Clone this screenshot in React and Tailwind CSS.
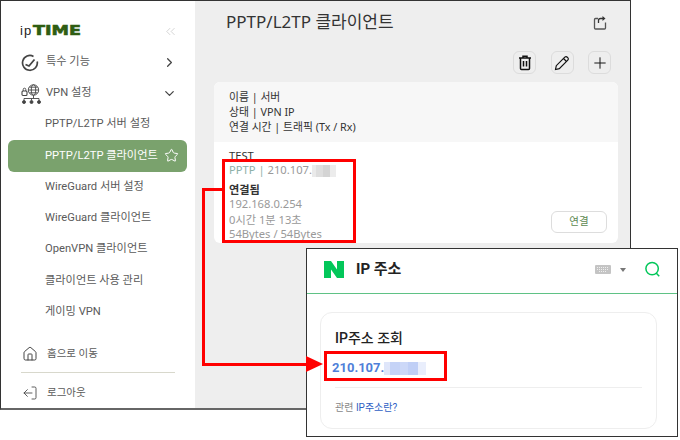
import { ChevronRight, ChevronDown, ChevronsLeft, Star, Plus, Home, LogOut } from 'lucide-react';

const KR = 'font-["Roboto","Noto_Sans_CJK_KR",sans-serif]';
const NOTO = 'font-["Noto_Sans","Noto_Sans_CJK_KR",sans-serif]';

function GaugeIcon() {
  return (
    <svg width="18" height="18" viewBox="0 0 18 18" fill="none" stroke="#444" strokeWidth="1.7">
      <path d="M12.5 2.4A7.4 7.4 0 1 0 16.2 7.5" />
      <path d="M4.5 10.5 L8 12 L13.5 5.5" strokeWidth="1.8" />
    </svg>
  );
}

function VpnIcon() {
  return (
    <svg width="20" height="20" viewBox="0 0 20 20" fill="none" stroke="#444" strokeWidth="0.9">
      <circle cx="12.5" cy="6" r="5.2" />
      <ellipse cx="12.5" cy="6" rx="2.2" ry="5.2" />
      <path d="M7.5 6h10M8.5 3.2h8M8.5 8.8h8" />
      <rect x="1" y="7" width="5" height="4.5" rx="1" strokeWidth="1.1" />
      <path d="M2.2 7V5.5a1.3 1.3 0 0 1 2.6 0V7" />
      <path d="M12.5 11.2v3M3 14.5h15M3 14.5v2M10.5 14.5v2M18 14.5v2" />
      <circle cx="3" cy="18" r="1.5" fill="#444" />
      <circle cx="10.5" cy="18" r="1.5" fill="#444" />
      <circle cx="18" cy="18" r="1.5" fill="#444" />
    </svg>
  );
}

function ExportIcon() {
  return (
    <svg width="14" height="15" viewBox="0 0 14 15" fill="none" stroke="#555" strokeWidth="1.3">
      <path d="M5 3.5H2.5a1 1 0 0 0-1 1v8.5a1 1 0 0 0 1 1h9a1 1 0 0 0 1-1V7.5" />
      <path d="M5.5 8V5.5a2 2 0 0 1 2-2h3.5" stroke="#333" />
      <path d="M9.5 1l3 2.5-3 2.5z" fill="#333" stroke="none" />
    </svg>
  );
}

function TrashIcon() {
  return (
    <svg width="14" height="16" viewBox="0 0 14 16" fill="none" stroke="#111" strokeWidth="1.5">
      <path d="M1 3h12M5 3V1.2h4V3" />
      <path d="M2.5 3v10.5a1 1 0 0 0 1 1h7a1 1 0 0 0 1-1V3" />
      <path d="M5.5 6v5.5M8.5 6v5.5" />
    </svg>
  );
}

function PencilIcon() {
  return (
    <svg width="16" height="16" viewBox="0 0 16 16" fill="none" stroke="#111" strokeWidth="1.2">
      <path d="M1.5 14.5l.8-3.8L10.8 2.2a1.8 1.8 0 0 1 2.5 0l.5.5a1.8 1.8 0 0 1 0 2.5L5.3 13.7z" />
      <path d="M9.5 3.5l3 3" />
    </svg>
  );
}

function NavRow({ icon, label, right }) {
  return (
    <div className="flex items-center h-[31px] shrink-0 pl-[20px] pr-[18px]">
      <div className="w-[25px] shrink-0 flex items-center">{icon}</div>
      <span className="text-[11.2px] text-[#5a5a5a] whitespace-nowrap">{label}</span>
      <div className="ml-auto">{right}</div>
    </div>
  );
}

function SubRow({ label, active }) {
  return (
    <div
      className={`flex items-center h-[31.3px] shrink-0 ml-[7px] mr-[8px] pl-[37px] pr-[8px] rounded-[6px] text-[11.2px] whitespace-nowrap ${
        active ? 'bg-[#7aa26d] text-white' : 'text-[#5a5a5a]'
      }`}
    >
      {label}
      {active && <Star size={15} strokeWidth={1.6} className="ml-auto" />}
    </div>
  );
}

function ToolButton({ children }) {
  return (
    <div className="w-[23px] h-[23px] rounded-[6px] border border-[#dcdcdc] flex items-center justify-center">
      {children}
    </div>
  );
}

export default function App() {
  return (
    <div className={`relative w-[680px] h-[440px] bg-white overflow-hidden ${KR}`}>
      {/* main window */}
      <div className="w-[631px] h-[410px] flex border-x border-t border-[#333] border-b-2 border-b-[#666] bg-[#eeeeee]">
        <aside className="w-[194px] shrink-0 h-full bg-white flex flex-col overflow-hidden">
          <div className="flex items-center h-[32px] shrink-0 mt-[14px] pl-[19px] pr-[17px]">
            <span className='text-[13px] text-[#222] tracking-[1px] font-["Liberation_Sans"]'>ip</span>
            <span className='ml-[1px] text-[13.5px] font-["DejaVu_Sans"] font-bold text-[#2f5d12] leading-none origin-left scale-x-[1.3] [-webkit-text-stroke:0.6px_#2f5d12]'>
              TIME
            </span>
            <ChevronsLeft size={15} strokeWidth={1} className="ml-auto text-[#bbb]" />
          </div>
          <NavRow icon={<GaugeIcon />} label="특수 기능" right={<ChevronRight size={15} strokeWidth={2} className="text-[#444]" />} />
          <NavRow icon={<VpnIcon />} label="VPN 설정" right={<ChevronDown size={15} strokeWidth={2} className="text-[#444]" />} />
          <SubRow label="PPTP/L2TP 서버 설정" />
          <SubRow label="PPTP/L2TP 클라이언트" active />
          <SubRow label="WireGuard 서버 설정" />
          <SubRow label="WireGuard 클라이언트" />
          <SubRow label="OpenVPN 클라이언트" />
          <SubRow label="클라이언트 사용 관리" />
          <SubRow label="게이밍 VPN" />
          <div className="mt-[7px] mx-[20px] flex items-center h-[38px] shrink-0 border-b border-[#d8d8cc] text-[10.5px] text-[#5a5a5a]">
            <Home size={16} strokeWidth={1.5} className="mr-[9px] ml-[1px] text-[#444]" />
            홈으로 이동
          </div>
          <div className="mx-[20px] flex items-center h-[36px] shrink-0 pt-[4px] text-[10.5px] text-[#5a5a5a]">
            <LogOut size={16} strokeWidth={1.3} className="mr-[9px] ml-[1px] text-[#444] -scale-x-100" />
            로그아웃
          </div>
        </aside>
        <main className={`flex-1 pl-[19px] pr-[12px] pt-[8px] ${NOTO}`}>
          <div className="flex items-center justify-between h-[26px] pl-[12px] pr-[11px]">
            <h1 className="text-[17px] text-[#333] font-normal whitespace-nowrap">PPTP/L2TP 클라이언트</h1>
            <ExportIcon />
          </div>
          <div className="flex justify-end gap-[14.5px] mt-[16px] pr-[7px]">
            <ToolButton><TrashIcon /></ToolButton>
            <ToolButton><PencilIcon /></ToolButton>
            <ToolButton><Plus size={18} strokeWidth={1.3} className="text-[#111]" /></ToolButton>
          </div>
          <div className="mt-[8px] h-[161px] rounded-[6px] overflow-hidden bg-white flex flex-col">
            <div className="h-[60px] bg-[#f7f7f7] px-[15px] pt-[7px] text-[10.8px] leading-[15px] text-[#333] shrink-0">
              <div>이름 | 서버</div>
              <div>상태 | VPN IP</div>
              <div>연결 시간 | 트래픽 (Tx / Rx)</div>
            </div>
            <div className="relative flex-1 px-[15px] pt-[7px] text-[11.2px]">
              <div className="leading-[14px] text-[#333]">TEST</div>
              <div className="leading-[14px] text-[#999] whitespace-nowrap">
                <span className="text-[#8db0a8]">PPTP</span> <span className="text-[#8db0a8]">|</span> 210.107.
                <span className="inline-flex h-[12px] align-middle">
                  <span className="w-[4px] bg-[#eaeaea]" />
                  <span className="w-[7px] bg-[#dedede]" />
                  <span className="w-[7px] bg-[#d4d4d4]" />
                  <span className="w-[6px] bg-[#ececec]" />
                </span>
              </div>
              <div className="mt-[6px] leading-[14px] font-bold text-[#333]">연결됨</div>
              <div className="leading-[14px] text-[#999]">192.168.0.254</div>
              <div className="mt-[2px] leading-[14px] text-[#999]">0시간 1분 13초</div>
              <div className="leading-[14px] text-[#999]">54Bytes / 54Bytes</div>
              <button className="absolute right-[11px] bottom-[10px] w-[56px] h-[22px] rounded-[6px] border border-[#ddd] bg-white text-[10.5px] text-[#5d8a52]">
                연결
              </button>
            </div>
          </div>
        </main>
      </div>

      {/* red callouts */}
      <div className="absolute left-[222px] top-[159px] w-[134px] h-[84px] border-[3px] border-[#f00]" />
      <div className="absolute left-[202px] top-[188px] w-[20px] h-[178px] border-l-[3px] border-t-[3px] border-[#f00]" />

      {/* naver window */}
      <div className="absolute left-[306px] top-[248px] w-[372px] h-[189px] border border-[#333] bg-white flex flex-col">
        <div className="h-[45px] shrink-0 border-b border-[#5fc285] flex items-center pl-[17px] pr-[16px] pb-[3px]">
          <svg width="20" height="17" viewBox="0 0 20 17" fill="#03c75a"><path d="M0 0h7l6 8.5V0h7v17h-7L7 8.5V17H0z" /></svg>
          <span className="ml-[12px] text-[15px] font-bold text-[#222]">IP 주소</span>
          <svg className="ml-auto" width="16" height="9" viewBox="0 0 16 9">
            <rect width="16" height="9" rx="1" fill="#c4c4c4" />
            <path d="M2 2.5h12M2 4.5h12M4 6.5h8" stroke="#eee" strokeWidth="1" strokeDasharray="1 1" />
          </svg>
          <svg className="ml-[9px]" width="6" height="4" viewBox="0 0 6 4" fill="#777"><path d="M0 0h6L3 4z" /></svg>
          <svg className="ml-[19px]" width="16" height="17" viewBox="0 0 18 18" fill="none" stroke="#03c75a" strokeWidth="1.7">
            <circle cx="8" cy="8" r="7" />
            <path d="M12.5 13l3.5 3.5" />
          </svg>
        </div>
        <div className="ml-[13px] mr-[20px] mt-[18px] h-[117px] rounded-[12px] border border-[#eeeeee] pl-[14px] pr-[14px] pt-[15px]">
          <div className="text-[14px] font-medium leading-[20px] text-[#222]">IP주소 조회</div>
          <div className="mt-[10px] -ml-[3px] text-[13px] font-bold leading-[20px] text-[#4f7fd9] whitespace-nowrap">
            210.107.
            <span className="inline-flex h-[13px] align-middle">
              <span className="w-[6px] bg-[#dfe6fa]" />
              <span className="w-[10px] bg-[#c5d3f7]" />
              <span className="w-[8px] bg-[#ccd8f8]" />
              <span className="w-[10px] bg-[#c0cff6]" />
              <span className="w-[8px] bg-[#e9eefc]" />
            </span>
          </div>
          <div className="mt-[9px] border-t border-[#eeeeee] pt-[12px] text-[10px] text-[#888]">
            관련 <span className="text-[#2f5fc4]">IP주소란?</span>
          </div>
        </div>
      </div>

      {/* over the naver window */}
      <div className="absolute left-[324px] top-[351px] w-[123px] h-[30px] border-[3px] border-[#f00]" />
      <div className="absolute left-[205px] top-[363px] w-[103px] h-[3px] bg-[#f00]" />
      <svg className="absolute left-[306px] top-[356px]" width="17" height="16" viewBox="0 0 17 16" fill="#f00"><path d="M0 0l17 8-17 8z" /></svg>
    </div>
  );
}
